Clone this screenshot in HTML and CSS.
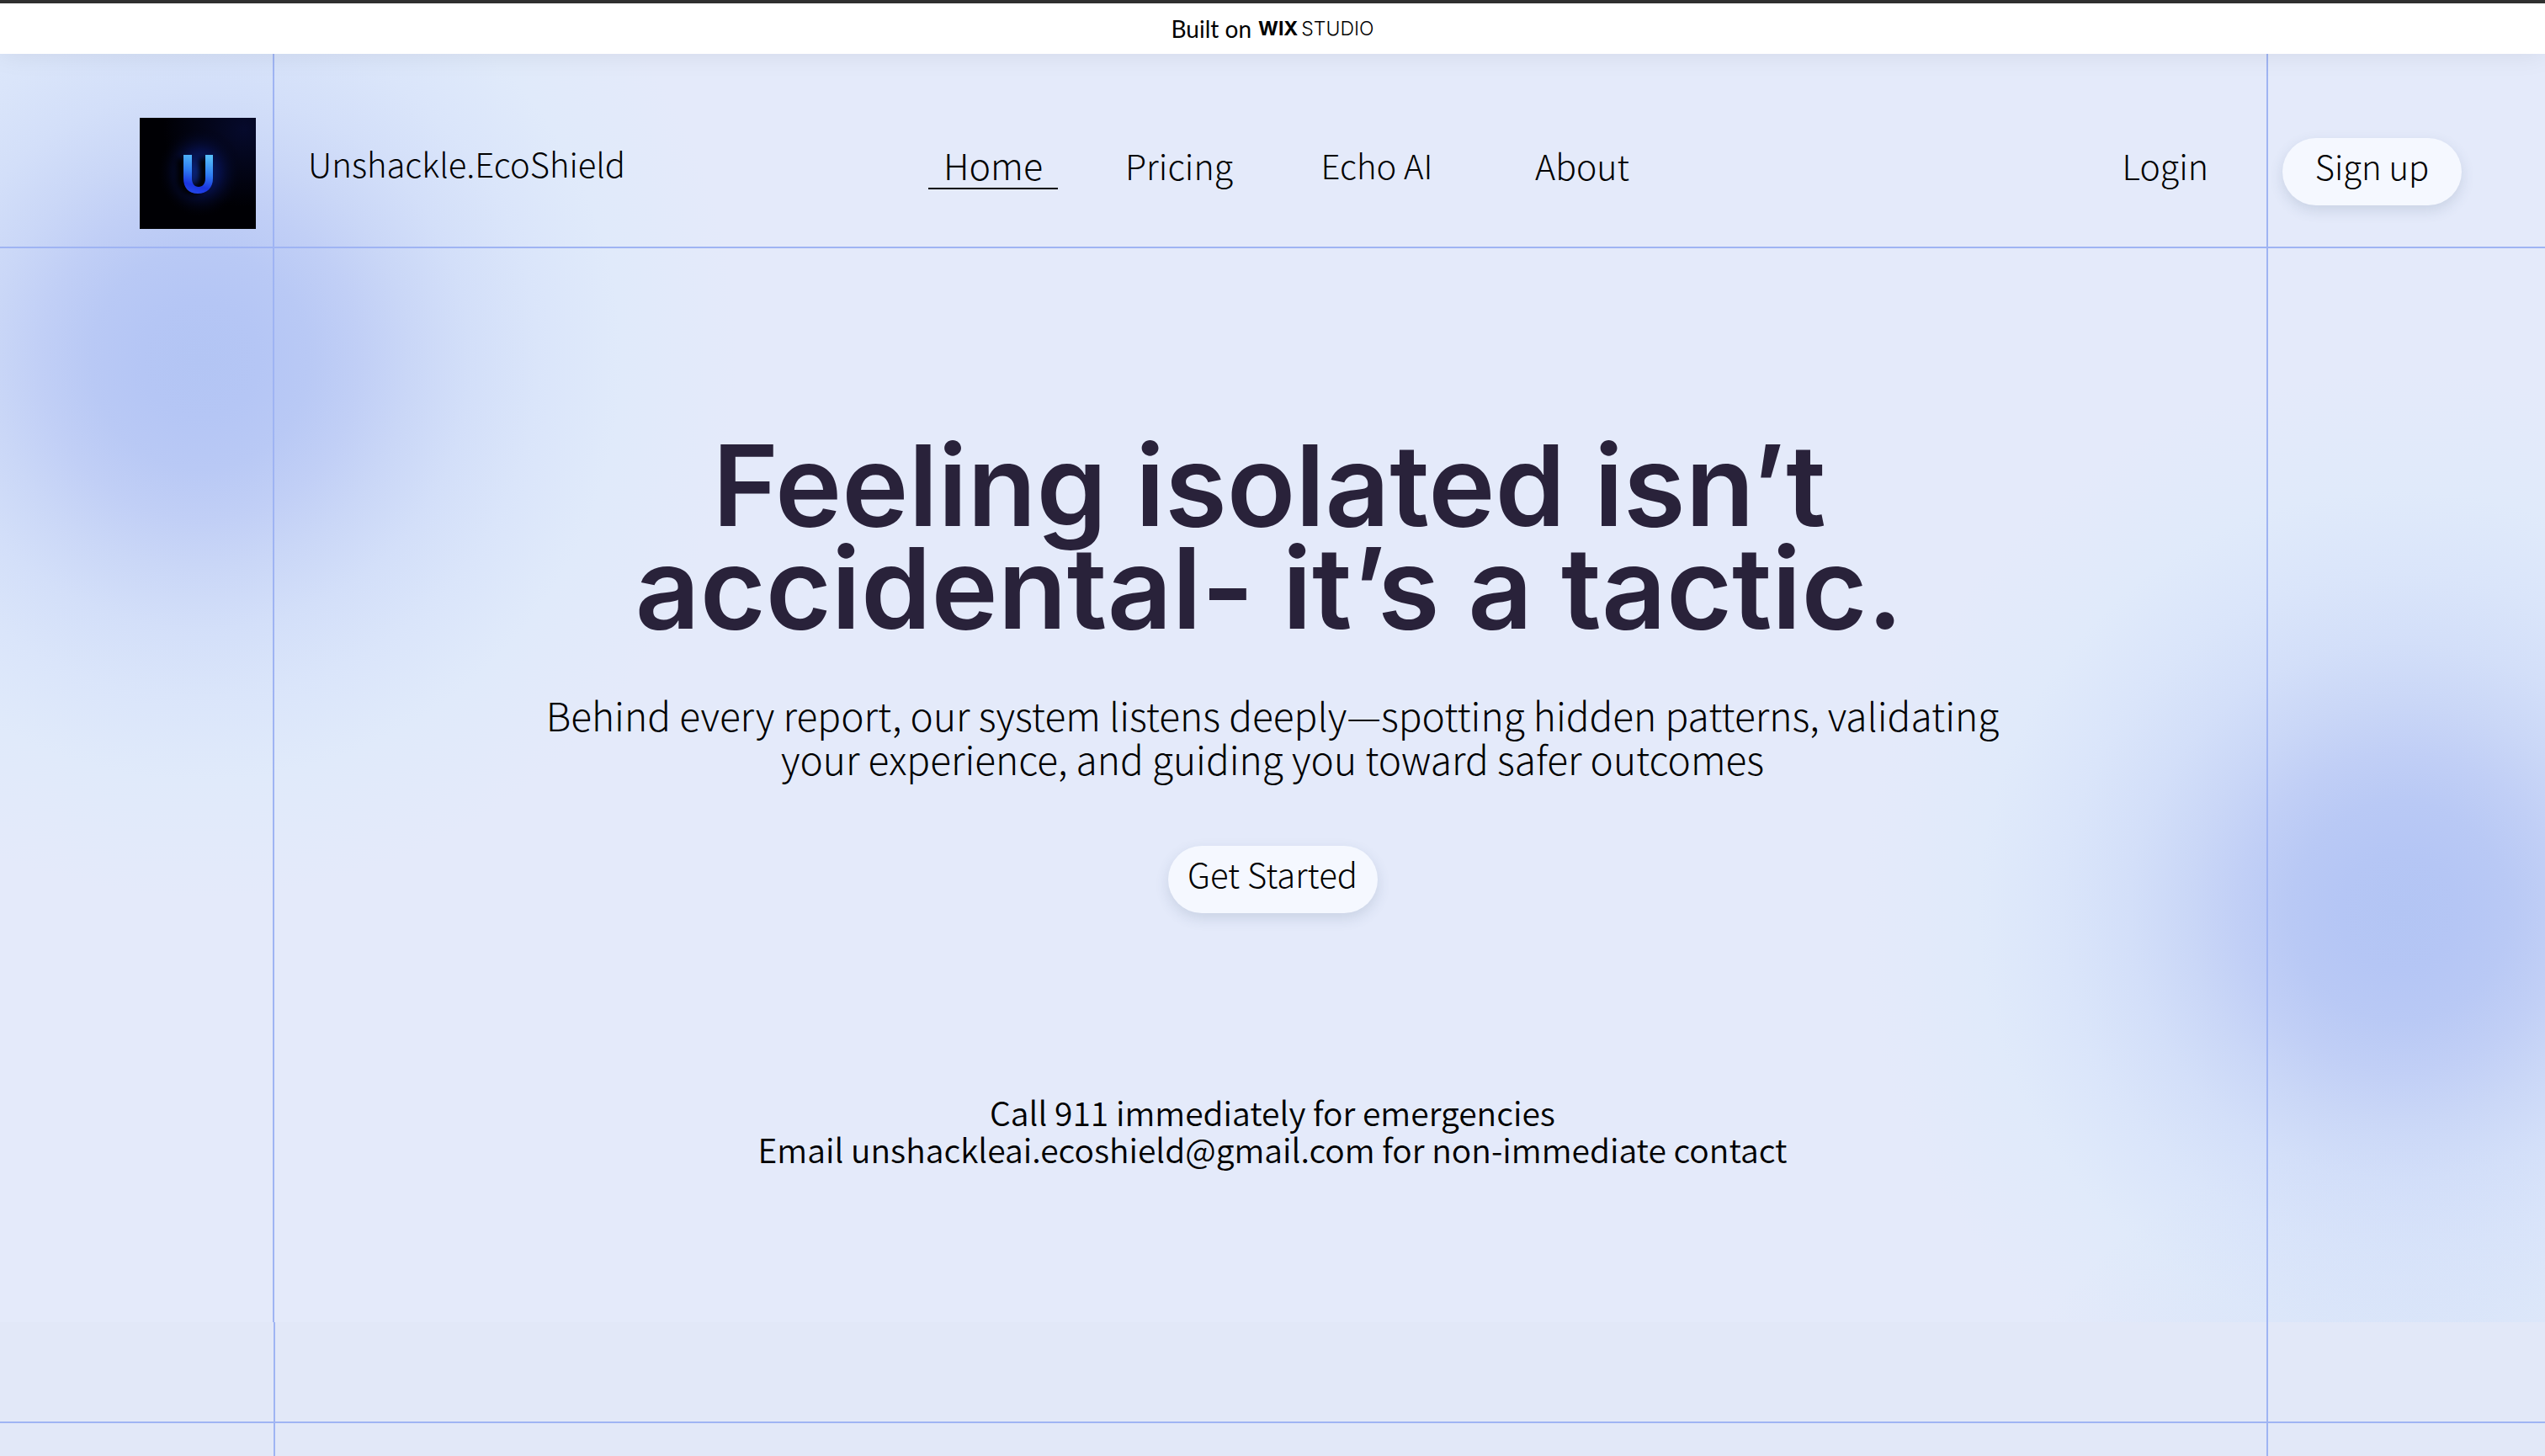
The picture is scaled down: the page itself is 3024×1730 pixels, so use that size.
FILE: index.html
```html
<!DOCTYPE html>
<html lang="en">
<head>
<meta charset="utf-8">
<meta name="viewport" content="width=device-width, initial-scale=1">
<title>Unshackle.EcoShield</title>
<link rel="stylesheet" href="styles.css">
</head>
<body>
<a class="banner" href="#">
  <span class="banner-text">Built on</span>
  <span class="banner-wix">WIX</span>
  <span class="banner-studio">STUDIO</span>
</a>
<div class="stage">
  <header class="header">
    <svg class="logo" viewBox="0 0 138 132" role="img" aria-label="Unshackle logo">
      <defs>
        <linearGradient id="letter" x1="0.6" y1="0" x2="0.4" y2="1">
          <stop offset="0" stop-color="#55bdfa"/>
          <stop offset="0.45" stop-color="#2f7df2"/>
          <stop offset="0.8" stop-color="#1a35e0"/>
          <stop offset="1" stop-color="#2346e8"/>
        </linearGradient>
        <radialGradient id="glow">
          <stop offset="0" stop-color="#0b2a8c"/>
          <stop offset="0.5" stop-color="#06104a" stop-opacity="0.8"/>
          <stop offset="1" stop-color="#01020c" stop-opacity="0"/>
        </radialGradient>
        <radialGradient id="corner" cx="0.9" cy="0.1" r="0.7">
          <stop offset="0" stop-color="#060a2c"/>
          <stop offset="1" stop-color="#000004"/>
        </radialGradient>
        <filter id="soft" x="-50%" y="-50%" width="200%" height="200%"><feGaussianBlur stdDeviation="3"/></filter>
      </defs>
      <rect width="138" height="132" fill="url(#corner)"/>
      <ellipse cx="72" cy="64" rx="50" ry="54" fill="url(#glow)"/>
      <path d="M49 48v24a13 14 0 0 0 27 0V48" fill="none" stroke="#000003" stroke-width="11" filter="url(#soft)"/>
      <path d="M52 44h10v28c0 6 3 10 8 10s8-4 8-10V44h9v28c0 11-7 18-18 18s-17-7-17-18z" fill="url(#letter)"/>
    </svg>
    <a class="brand" href="#">Unshackle.EcoShield</a>
    <nav class="nav" aria-label="Main">
      <a class="nav-link nav-link-current" href="#" aria-current="page">Home</a>
      <a class="nav-link" href="#">Pricing</a>
      <a class="nav-link nav-link-small" href="#">Echo AI</a>
      <a class="nav-link" href="#">About</a>
    </nav>
    <div class="account">
      <a class="nav-link login" href="#">Login</a>
      <button class="pill pill-signup" type="button">Sign up</button>
    </div>
  </header>
  <main class="hero">
    <h1 class="title">Feeling isolated isn’t<br>accidental- it’s a tactic.</h1>
    <p class="lead">Behind every report, our system listens deeply—spotting hidden patterns, validating<br>your experience, and guiding you toward safer outcomes</p>
    <button class="pill pill-start" type="button">Get Started</button>
    <p class="contact">Call 911 immediately for emergencies<br>Email unshackleai.ecoshield@gmail.com for non-immediate contact</p>
  </main>
</div>
<section class="next"><div class="next-rule"></div></section>
</body>
</html>
```

FILE: styles.css
```css
:root {
  --line: #9fb4f3;
  --page: #e4eafa;
  --rail-left: 324px;
  --rail-right: 329px;
  --glow: #b3c5f4 0, #b5c6f5 70px, #b9c9f5 130px, #c1cff6 190px, #cad7f7 250px, #d3dff9 320px, #dae5fa 400px, #e0eafa 500px, rgba(228, 234, 250, 0) 640px;
  --body-font: "Noto Sans CJK SC", "Noto Sans", sans-serif;
}

* { box-sizing: border-box; }

body {
  margin: 0;
  min-height: 100vh;
  display: flex;
  flex-direction: column;
  background: #e2e8f8;
  color: #000;
  font-family: var(--body-font);
  font-weight: 300;
}

a { color: inherit; text-decoration: none; }

.banner {
  height: 64px;
  display: flex;
  align-items: center;
  justify-content: center;
  background: #fff;
  border-top: 4px solid #303030;
  box-shadow: 0 0 32px rgba(0, 0, 0, 0.08);
  position: relative;
  font-family: Lato, sans-serif;
  font-weight: 400;
}

.banner-text { font-size: 28px; margin-right: 8px; }
.banner-wix { font-family: Inter, sans-serif; font-size: 23px; font-weight: 700; margin-right: 4px; }
.banner-studio { font-family: Inter, sans-serif; font-size: 23px; font-weight: 300; }

/* Two vertical rails drawn over soft blue glows */
.stage {
  background:
    linear-gradient(var(--line), var(--line)) left var(--rail-left) top / 2px 100% no-repeat,
    linear-gradient(var(--line), var(--line)) right var(--rail-right) top / 2px 100% no-repeat,
    radial-gradient(circle at right 173px bottom -300px, rgba(180, 197, 245, 0.3) 0, rgba(180, 197, 245, 0) 520px),
    radial-gradient(circle at 238px 363px, var(--glow)),
    radial-gradient(circle at right 173px top 1019px, var(--glow)),
    var(--page);
}

.header {
  height: 231px;
  padding: 54px 99px 0 166px;
  border-bottom: 2px solid var(--line);
  display: grid;
  grid-template-columns: 138px 799px 930px 1fr;
  align-items: center;
}

.logo { width: 138px; height: 132px; display: block; }
.brand { padding: 0 0 24px 62px; font-size: 40px; line-height: 60px; }

.nav {
  padding-bottom: 20px;
  display: grid;
  grid-template-columns: 154px 288px 182px 306px;
  align-items: center;
}

.nav-link { font-size: 41px; line-height: 56px; text-align: center; }
.nav-link-current { font-size: 43px; border-bottom: 2px solid #000; }
.nav-link-small { font-size: 40px; }

.account {
  padding-bottom: 4px;
  display: flex;
  align-items: center;
  justify-content: flex-end;
  gap: 88px;
}

.login { padding-bottom: 16px; }

.pill {
  height: 80px;
  padding: 0 0 14px;
  border: 0;
  border-radius: 40px;
  background: #f5f8ff;
  color: #000;
  box-shadow: 0 6px 16px rgba(60, 90, 120, 0.16);
  font-family: var(--body-font);
  font-weight: 300;
  font-size: 40px;
  line-height: 60px;
}

.pill-signup { width: 213px; }
.pill-start { width: 249px; }

.hero {
  padding: 220px 40px 184px;
  display: flex;
  flex-direction: column;
  align-items: center;
  text-align: center;
}

.title {
  margin: 0;
  padding-right: 8px;
  color: #29223a;
  font-family: Inter, sans-serif;
  font-size: 134px;
  font-weight: 600;
  line-height: 122px;
}

.lead { margin: 64px 0 0; font-size: 46px; line-height: 52px; }
.pill-start { margin-top: 78px; }
.contact { margin: 214px 0 0; font-size: 39px; line-height: 44px; font-weight: 350; }

.next {
  flex: 1;
  min-height: 159px;
  padding-top: 118px;
  background:
    linear-gradient(var(--line), var(--line)) left 325px top / 2px 100% no-repeat,
    linear-gradient(var(--line), var(--line)) right var(--rail-right) top / 2px 100% no-repeat;
}

.next-rule { height: 2px; background: var(--line); }
```
